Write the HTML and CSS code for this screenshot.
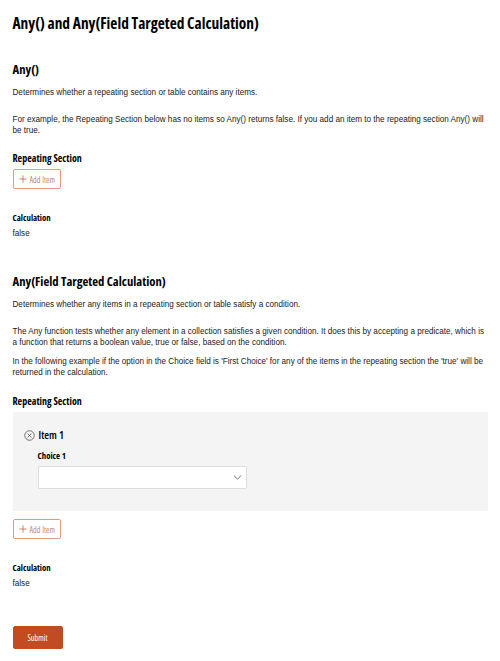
FILE: index.html
```html
<!DOCTYPE html>
<html lang="en">
<head>
<meta charset="utf-8">
<title>Any() and Any(Field Targeted Calculation)</title>
<link rel="stylesheet" href="styles.css">
</head>
<body>
<main class="form">
  <h1 class="title">Any() and Any(Field Targeted Calculation)</h1>

  <section class="intro">
    <h2 class="heading">Any()</h2>
    <p class="text first">Determines whether a repeating section or table contains any items.</p>
    <p class="text">For example, the Repeating Section below has no items so Any() returns false. If you add an item to the repeating section Any() will be true.</p>
  </section>

  <h3 class="label section-label">Repeating Section</h3>
  <button class="add" type="button">
    <svg class="plus" viewBox="0 0 10 10" width="10" height="10"><path d="M5 .5v9M.5 5h9"/></svg>
    <span>Add Item</span>
  </button>

  <div class="calc">
    <div class="calc-label">Calculation</div>
    <div class="value">false</div>
  </div>

  <section class="second">
    <h2 class="heading">Any(Field Targeted Calculation)</h2>
    <p class="text first">Determines whether any items in a repeating section or table satisfy a condition.</p>
    <p class="text">The Any function tests whether any element in a collection satisfies a given condition. It does this by accepting a predicate, which is a function that returns a boolean value, true or false, based on the condition.</p>
    <p class="text tight">In the following example if the option in the Choice field is 'First Choice' for any of the items in the repeating section the 'true' will be returned in the calculation.</p>
  </section>

  <h3 class="label section-label second-label">Repeating Section</h3>
  <div class="repeat">
    <div class="item-head">
      <svg class="remove" viewBox="0 0 12 12" width="11" height="11"><circle cx="6" cy="6" r="5.2"/><path d="M3.9 3.9l4.2 4.2M8.1 3.9l-4.2 4.2"/></svg>
      <span class="item-title">Item 1</span>
    </div>
    <div class="field">
      <div class="calc-label">Choice 1</div>
      <div class="select">
        <svg class="chevron" viewBox="0 0 10 6" width="9" height="5"><path d="M.6.6L5 5 9.4.6"/></svg>
      </div>
    </div>
  </div>
  <button class="add add-two" type="button">
    <svg class="plus" viewBox="0 0 10 10" width="10" height="10"><path d="M5 .5v9M.5 5h9"/></svg>
    <span>Add Item</span>
  </button>

  <div class="calc">
    <div class="calc-label">Calculation</div>
    <div class="value">false</div>
  </div>

  <button class="submit" type="button">Submit</button>
</main>
</body>
</html>
```
FILE: styles.css
```css
* { box-sizing: border-box; }
html, body { margin: 0; padding: 0; background: #fff; }
body { font-family: "Liberation Sans", Arial, sans-serif; color: #222; }
.form { padding: 14px 12px 12px 12.5px; }
.title, .heading, .label, .calc-label, .item-title, .add, .submit {
  font-family: "Open Sans", sans-serif;
  font-stretch: 75%;
}
.title { margin: 0; font-size: 15.4px; line-height: 20px; font-weight: 700; color: #000; }
.heading { margin: 0; font-size: 12.7px; line-height: 17px; font-weight: 700; color: #000; }
.intro { margin-top: 27px; }
.text { margin: 16px 0 0; font-size: 8.15px; line-height: 11px; color: #222; }
.text.first { margin-top: 9px; }
.text.tight { margin-top: 8px; }
.label { margin: 0; font-size: 10px; line-height: 14px; font-weight: 700; color: #000; }
.section-label { margin-top: 15px; }
.add {
  display: flex; align-items: center; gap: 3px;
  margin-top: 4px; width: 48px; height: 20px; padding: 0 0 0 5px;
  background: #fff; border: 1px solid #e39a80; border-radius: 2px;
  font-size: 8.2px; color: #c9876f;
}
.plus { fill: none; stroke: #c8532c; stroke-width: .9; flex: none; width: 8px; height: 8px; }
.calc { margin-top: 23px; }
.calc-label { font-size: 8.8px; line-height: 12px; font-weight: 700; color: #000; }
.value { margin-top: 4px; font-size: 8.15px; line-height: 11px; color: #222; }
.second { margin-top: 34px; }
.second-label { margin-top: 16px; }
.repeat { margin-top: 4px; height: 99px; padding: 17px 0 0 11px; background: #f4f4f4; }
.item-head { display: flex; align-items: center; gap: 4px; height: 12px; }
.remove { fill: none; stroke: #444; stroke-width: .8; flex: none; }
.item-title { font-size: 11px; line-height: 12px; font-weight: 600; color: #000; }
.field { margin: 9px 0 0 14px; width: 209px; }
.select {
  display: flex; align-items: center; justify-content: flex-end;
  margin-top: 4px; height: 23px; padding-right: 4px;
  background: #fff; border: 1px solid #ddd; border-radius: 1px;
}
.chevron { fill: none; stroke: #555; stroke-width: 1; }
.add-two { margin-top: 8px; }
.submit {
  display: block; margin-top: 37px; width: 50px; height: 23px; padding: 0;
  background: #c34b22; border: 1px solid #c34b22; border-radius: 2px;
  font-size: 8.2px; color: #fff;
}
```
